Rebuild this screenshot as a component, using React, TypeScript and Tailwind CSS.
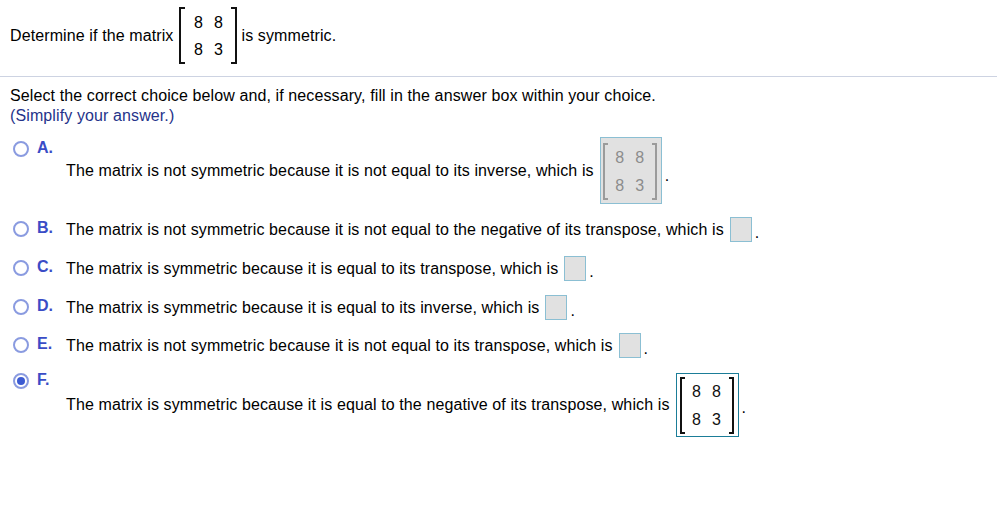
import React from "react";

type Variant = "plain" | "empty" | "filled";

// bracketed 2x2 matrix, brackets drawn with borders
function Matrix({
  rows,
  bracket,
  digit,
}: {
  rows: string[][];
  bracket: string;
  digit: string;
}) {
  return (
    <div className="flex h-[57px]">
      <div className={`w-[5px] border-l-2 border-t-2 border-b-2 ${bracket}`} />
      <div className="px-[2px] pt-[1px] grid grid-cols-[20px_20px] grid-rows-2">
        {rows.flat().map((v, i) => (
          <div
            key={i}
            className={`flex items-center justify-center text-[16px] tracking-normal ${digit}`}
          >
            {v}
          </div>
        ))}
      </div>
      <div className={`w-[5px] border-r-2 border-t-2 border-b-2 ${bracket}`} />
    </div>
  );
}

function Radio({ checked }: { checked?: boolean }) {
  return (
    <div className="w-4 h-4 rounded-full border-2 border-[#8a9be0] bg-white flex items-center justify-center">
      {checked && <div className="w-[8px] h-[8px] rounded-full bg-[#3c5bd2]" />}
    </div>
  );
}

const M = [
  ["8", "8"],
  ["8", "3"],
];

function AnswerBox({ variant }: { variant: Variant }) {
  if (variant === "empty") {
    return <div className="w-[22px] h-[25px] bg-[#e1e1e1] border border-[#8bbfd3]" />;
  }
  if (variant === "plain") {
    return (
      <div className="w-[62px] h-[67px] bg-[#e1e1e1] border border-[#8bbfd3] pl-[2px] pt-[5px]">
        <Matrix rows={M} bracket="border-[#9b9b9b]" digit="text-[#8c8c8c]" />
      </div>
    );
  }
  return (
    <div className="w-[63px] h-[64px] bg-white border-[1.5px] border-[#1b7d98] pl-[3px] pt-[3px]">
      <Matrix rows={M} bracket="border-[#111]" digit="text-[#111]" />
    </div>
  );
}

const OPTIONS: {
  key: string;
  text: string;
  box: Variant;
  checked?: boolean;
  mt: string;
}[] = [
  {
    key: "A",
    text: "The matrix is not symmetric because it is not equal to its inverse, which is",
    box: "plain",
    mt: "mt-[11px]",
  },
  {
    key: "B",
    text: "The matrix is not symmetric because it is not equal to the negative of its transpose, which is",
    box: "empty",
    mt: "mt-[13px]",
  },
  {
    key: "C",
    text: "The matrix is symmetric because it is equal to its transpose, which is",
    box: "empty",
    mt: "mt-[14px]",
  },
  {
    key: "D",
    text: "The matrix is symmetric because it is equal to its inverse, which is",
    box: "empty",
    mt: "mt-[14px]",
  },
  {
    key: "E",
    text: "The matrix is not symmetric because it is not equal to its transpose, which is",
    box: "empty",
    mt: "mt-[13px]",
  },
  {
    key: "F",
    text: "The matrix is symmetric because it is equal to the negative of its transpose, which is",
    box: "filled",
    checked: true,
    mt: "mt-[15px]",
  },
];

export default function App() {
  return (
    <div className="w-[997px] h-[508px] bg-white text-black text-[16px] tracking-[0.11px] font-['Liberation_Sans',Arial,sans-serif] overflow-hidden">
      {/* Question */}
      <div className="flex items-center pl-[10px] pt-[7px]">
        <span>Determine if the matrix</span>
        <div className="ml-[6px] mr-[4px]">
          <div className="flex h-[57px]">
            <div className="w-[6px] border-l-2 border-t-2 border-b-2 border-[#111]" />
            <div className="px-[3px] pt-[2px] grid grid-cols-[20px_20px] grid-rows-2">
              {["8", "8", "8", "3"].map((v, i) => (
                <div key={i} className="flex items-center justify-center text-[16px] tracking-normal">
                  {v}
                </div>
              ))}
            </div>
            <div className="w-[6px] border-r-2 border-t-2 border-b-2 border-[#111]" />
          </div>
        </div>
        <span>is symmetric.</span>
      </div>

      <div className="mt-[12px] h-px bg-[#cdd3e2]" />

      {/* Instructions */}
      <div className="pl-[10px] mt-[9px] leading-[20px]">
        <div>
          Select the correct choice below and, if necessary, fill in the answer box within your choice.
        </div>
        <div className="text-[#25338a]">(Simplify your answer.)</div>
      </div>

      {/* Choices */}
      <div className="pl-[13px]">
        {OPTIONS.map((o) => (
          <div key={o.key} className={`flex items-start ${o.mt}`}>
            <div className={`flex items-center w-[53px] ${o.checked ? "mt-0" : "mt-[4px]"}`}>
              <Radio checked={o.checked} />
              <span className="ml-[8px] text-[16px] tracking-normal font-bold text-[#3a4cc6] leading-4 -translate-y-px">
                {o.key}.
              </span>
            </div>
            <div className="flex items-center">
              <span>{o.text}</span>
              <div className="ml-[6px]">
                <AnswerBox variant={o.box} />
              </div>
              <span
                className={`ml-[3px] ${
                  o.box === "plain" ? "translate-y-[5px]" : "translate-y-[3px]"
                }`}
              >
                .
              </span>
            </div>
          </div>
        ))}
      </div>
    </div>
  );
}
